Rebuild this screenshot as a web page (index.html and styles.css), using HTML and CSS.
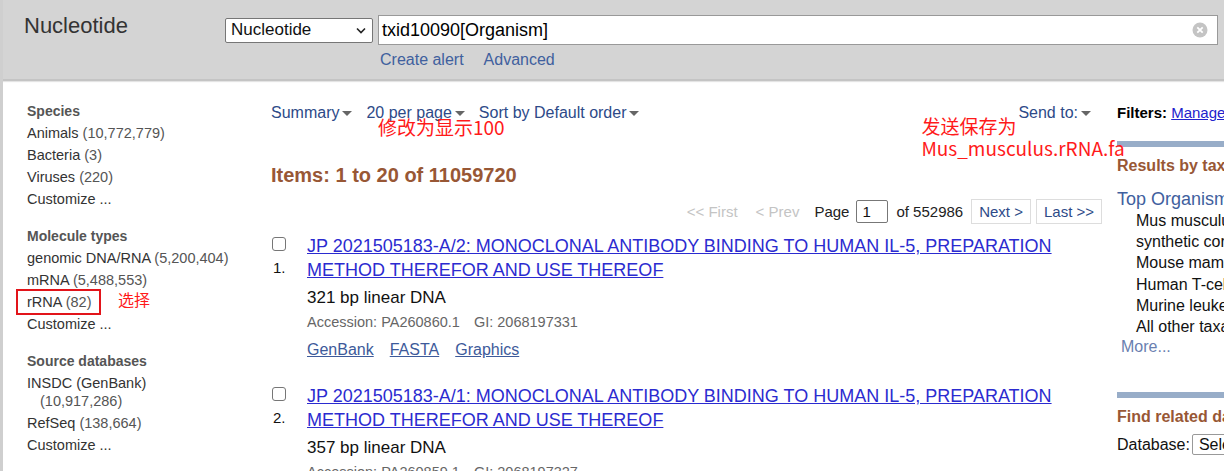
FILE: index.html
```html
<!DOCTYPE html>
<html lang="en">
<head>
<meta charset="utf-8">
<title>Nucleotide</title>
<link rel="stylesheet" href="styles.css">
</head>
<body>
<div class="page">
  <header class="topbar">
    <div class="brand">Nucleotide</div>
    <div class="search">
      <div class="search-row">
        <div class="db-select">Nucleotide<svg class="chev" width="10" height="7" viewBox="0 0 10 7"><path d="M1 1.5 L5 5.5 L9 1.5" fill="none" stroke="#222" stroke-width="1.6"/></svg></div>
        <div class="term">
          <span>txid10090[Organism]</span>
          <svg class="clear" width="16" height="16" viewBox="0 0 16 16"><circle cx="8" cy="8" r="7.5" fill="#c4c4c4"/><path d="M5.3 5.3 L10.7 10.7 M10.7 5.3 L5.3 10.7" stroke="#fff" stroke-width="1.8"/></svg>
        </div>
      </div>
      <div class="search-links"><a>Create alert</a><a>Advanced</a></div>
    </div>
  </header>

  <div class="content">
    <aside class="facets">
      <div class="group">
        <div class="ghead">Species</div>
        <div class="fitem">Animals <span class="cnt">(10,772,779)</span></div>
        <div class="fitem">Bacteria <span class="cnt">(3)</span></div>
        <div class="fitem">Viruses <span class="cnt">(220)</span></div>
        <div class="fitem">Customize ...</div>
      </div>
      <div class="group">
        <div class="ghead">Molecule types</div>
        <div class="fitem">genomic DNA/RNA <span class="cnt">(5,200,404)</span></div>
        <div class="fitem">mRNA <span class="cnt">(5,488,553)</span></div>
        <div class="fitem"><span class="boxed">rRNA <span class="cnt">(82)</span></span><span class="note note-select">选择</span></div>
        <div class="fitem">Customize ...</div>
      </div>
      <div class="group">
        <div class="ghead">Source databases</div>
        <div class="fitem">INSDC (GenBank)<span class="cnt wrapcnt">(10,917,286)</span></div>
        <div class="fitem">RefSeq <span class="cnt">(138,664)</span></div>
        <div class="fitem">Customize ...</div>
      </div>
    </aside>

    <main class="results">
      <div class="toolbar">
        <div class="tools">
          <span class="dd">Summary<i class="tri"></i></span>
          <span class="dd">20 per page<i class="tri"></i></span>
          <span class="dd">Sort by Default order<i class="tri"></i></span>
          <span class="note note-page">修改为显示100</span>
        </div>
        <div class="sendto">
          <span class="dd">Send to:<i class="tri"></i></span>
          <span class="note note-send">发送保存为<br>Mus_musculus.rRNA.fa</span>
        </div>
      </div>

      <h2 class="count">Items: 1 to 20 of 11059720</h2>

      <div class="pager">
        <span class="off first">&lt;&lt; First</span>
        <span class="off">&lt; Prev</span>
        <span class="pg">Page</span>
        <span class="pgbox">1</span>
        <span class="pg">of 552986</span>
        <span class="pbtn">Next &gt;</span>
        <span class="pbtn">Last &gt;&gt;</span>
      </div>

      <div class="rslt">
        <div class="rnum"><span class="cb"></span><span class="idx">1.</span></div>
        <div class="rbody">
          <a class="rtitle">JP 2021505183-A/2: MONOCLONAL ANTIBODY BINDING TO HUMAN IL-5, PREPARATION METHOD THEREFOR AND USE THEREOF</a>
          <div class="rdesc">321 bp linear DNA</div>
          <div class="rmeta">Accession: PA260860.1<span class="gap"></span>GI: 2068197331</div>
          <div class="rlinks"><a>GenBank</a><a>FASTA</a><a>Graphics</a></div>
        </div>
      </div>

      <div class="rslt">
        <div class="rnum"><span class="cb"></span><span class="idx">2.</span></div>
        <div class="rbody">
          <a class="rtitle">JP 2021505183-A/1: MONOCLONAL ANTIBODY BINDING TO HUMAN IL-5, PREPARATION METHOD THEREFOR AND USE THEREOF</a>
          <div class="rdesc">357 bp linear DNA</div>
          <div class="rmeta">Accession: PA260859.1<span class="gap"></span>GI: 2068197327</div>
        </div>
      </div>
    </main>

    <aside class="side">
      <div class="filters"><b>Filters:</b> <a>Manage Filters</a></div>
      <div class="portlet">
        <div class="phead">Results by taxon</div>
        <div class="ptitle">Top Organisms</div>
        <ul class="orgs">
          <li>Mus musculus (10,758,113)</li>
          <li>synthetic construct (17,310)</li>
          <li>Mouse mammary tumor virus (120)</li>
          <li>Human T-cell leukemia virus (19)</li>
          <li>Murine leukemia virus (14)</li>
          <li>All other taxa (4)</li>
        </ul>
        <div class="more">More...</div>
      </div>
      <div class="portlet second">
        <div class="phead">Find related data</div>
        <div class="dbrow">Database:<span class="dbsel">Select</span></div>
      </div>
    </aside>
  </div>
</div>
</body>
</html>
```

FILE: styles.css
```css
* { box-sizing: border-box; }
html, body { margin: 0; padding: 0; }
body {
  font-family: "Liberation Sans", Arial, "Noto Sans CJK SC", sans-serif;
  color: #222;
  background: #fff;
  overflow: hidden;
}
.page {
  width: 1224px;
  height: 471px;
  border-left: 3px solid #cfcfcf;
  overflow: hidden;
}
a { cursor: pointer; }

/* header */
.topbar {
  height: 81px;
  background: #d4d4d4;
  border-bottom: 2px solid #c4c4c4;
  box-shadow: 0 1px 1px #e4e4e4;
  display: flex;
  align-items: flex-start;
}
.brand {
  width: 222px;
  padding: 13px 0 0 21px;
  font-size: 22px;
  color: #333;
}
.search { padding-top: 15px; }
.search-row { display: flex; align-items: center; }
.db-select {
  width: 148px;
  height: 25px;
  background: #fff;
  border: 1px solid #767676;
  border-radius: 2px;
  font-size: 17px;
  color: #111;
  padding: 0 6px 0 5px;
  display: flex;
  align-items: center;
  justify-content: space-between;
}
.chev { display: block; }
.term {
  margin-left: 5px;
  width: 840px;
  height: 30px;
  background: #fff;
  border: 1px solid #999;
  display: flex;
  align-items: center;
  justify-content: space-between;
  padding: 0 9px 0 3px;
  font-size: 18px;
  color: #000;
}
.clear { display: block; }
.search-links { padding: 6px 0 0 155px; font-size: 16px; }
.search-links a { color: #40609e; margin-right: 20px; }

/* layout */
.content { display: flex; align-items: flex-start; }

/* facets */
.facets { width: 268px; flex: none; padding: 19px 0 0 24px; }
.group + .group { margin-top: 15px; }
.ghead { font-weight: bold; font-size: 14px; color: #555; line-height: 18px; padding: 2px 0 2px; }
.fitem { font-size: 14.5px; line-height: 18px; padding: 2px 0; color: #333; position: relative; white-space: nowrap; }
.cnt { color: #555; }
.wrapcnt { display: block; padding-left: 13px; }
.boxed {
  display: inline-block;
  border: 2px solid #e2141a;
  padding: 2px 8px 2px 9px;
  margin: -4px 0 -4px -11px;
}
.note { position: absolute; color: #ff1a1a; font-family: "Noto Sans CJK SC", "Liberation Sans", sans-serif; white-space: nowrap; }
.note-select { left: 91px; top: -1px; font-size: 16px; }

/* main results */
.results { width: 831px; flex: none; padding-top: 22px; }
.toolbar { display: flex; justify-content: space-between; font-size: 16px; line-height: 20px; }
.tools { position: relative; display: flex; gap: 14px; }
.dd { color: #2d4a88; white-space: nowrap; }
.tri {
  display: inline-block;
  width: 0; height: 0;
  border-left: 5px solid transparent;
  border-right: 5px solid transparent;
  border-top: 5px solid #666;
  margin-left: 3px;
  vertical-align: 2px;
}
.sendto { position: relative; margin-right: 11px; }
.note-page { left: 107px; top: 13px; font-size: 19px; line-height: 22px; }
.note-send { left: -97px; top: 12px; font-size: 19px; line-height: 22px; }

.count { margin: 40px 0 0; font-size: 20px; line-height: 24px; font-weight: bold; color: #985735; }

.pager {
  display: flex;
  justify-content: flex-end;
  align-items: center;
  margin-top: 11px;
  font-size: 15px;
  height: 26px;
}
.off { color: #c4c4c4; margin-right: 15px; }
.off.first { margin-right: 18px; }
.pg { color: #222; }
.pgbox {
  width: 32px; height: 23px;
  border: 1px solid #777;
  border-radius: 2px;
  margin: 0 8px 0 7px;
  padding: 2px 0 0 5px;
  color: #111;
}
.pbtn {
  border: 1px solid #ddd;
  color: #2d4a88;
  padding: 3px 7px;
  margin-left: 8px;
}
.pbtn + .pbtn { margin-left: 5px; }

.rslt { display: flex; margin-top: 10px; }
.rslt + .rslt { margin-top: 22px; }
.rnum { width: 36px; flex: none; display: flex; flex-direction: column; align-items: flex-start; padding-left: 1px; }
.cb {
  width: 14px; height: 14px;
  border: 1px solid #767676;
  border-radius: 3px;
  margin-top: 3px;
}
.idx { font-size: 15px; margin-top: 8px; padding-left: 1px; color: #111; }
.rbody { flex: 1; }
.rtitle {
  display: block;
  font-size: 18px;
  line-height: 24px;
  color: #2b2bd0;
  text-decoration: underline;
}
.rdesc { font-size: 17px; color: #111; margin-top: 4px; line-height: 24px; }
.rmeta { font-size: 14.5px; color: #666; line-height: 24px; }
.gap { display: inline-block; width: 14px; }
.rlinks { font-size: 16px; line-height: 24px; margin-top: 4px; }
.rlinks a { color: #3d5a9a; text-decoration: underline; margin-right: 16px; }

/* right side */
.side { width: 200px; flex: none; margin-left: 15px; padding-top: 22px; }
.filters { font-size: 15px; line-height: 20px; color: #000; white-space: nowrap; }
.filters a { color: #2222cc; text-decoration: underline; }
.portlet { border-top: 6px solid #98adc8; margin-top: 18px; padding-top: 8px; }
.portlet.second { margin-top: 35px; }
.phead { font-weight: bold; font-size: 16px; color: #985735; line-height: 22px; white-space: nowrap; }
.ptitle { font-size: 18px; color: #40609e; margin-top: 11px; line-height: 22px; }
.orgs { list-style: none; margin: 0; padding: 0 0 0 19px; font-size: 16px; line-height: 21.2px; color: #111; white-space: nowrap; }
.more { font-size: 16px; color: #6a7fb0; padding-left: 4px; line-height: 20px; }
.dbrow { font-size: 16px; margin-top: 8px; white-space: nowrap; color: #111; }
.dbsel { border: 1px solid #999; padding: 1px 6px; border-radius: 2px; margin-left: 2px; }
```
